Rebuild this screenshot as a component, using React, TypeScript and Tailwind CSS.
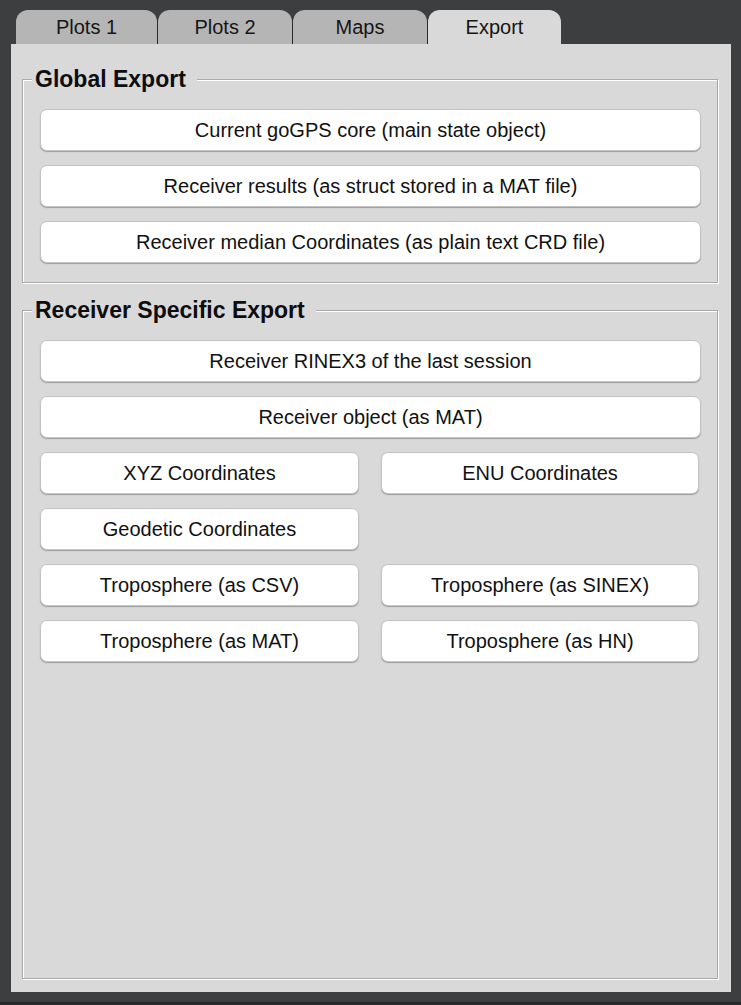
import React from 'react';

const tabs = [
  { label: 'Plots 1', width: 'w-[141px]', first: true },
  { label: 'Plots 2', width: 'w-[135px]' },
  { label: 'Maps', width: 'w-[135px]' },
  { label: 'Export', width: 'w-[134px]', active: true },
];

const ExportButton: React.FC<{ label: string; className?: string }> = ({ label, className = 'w-[661px]' }) => (
  <button
    className={`${className} h-[42px] shrink-0 rounded-[7px] bg-white border border-[#c4c4c4] shadow-[0_1px_1px_rgba(0,0,0,0.28)] text-[20px] text-[#111] leading-none`}
  >
    {label}
  </button>
);

const GroupBox: React.FC<{ title: string; className: string; children: React.ReactNode }> = ({ title, className, children }) => (
  <div
    className={`relative w-[696px] border border-[#a9a9a9] shadow-[inset_1px_1px_0_#fff,1px_1px_0_#fff] pt-[29px] pl-[17px] ${className}`}
  >
    <div className="absolute left-[9px] top-[-1px] -translate-y-1/2 bg-[#d9d9d9] pl-[3px] pr-[11px] text-[23px] font-bold leading-[28px] text-[#0d0d0d]">
      {title}
    </div>
    {children}
  </div>
);

const App: React.FC = () => {
  return (
    <div className="w-[741px] h-[1005px] bg-[#3d3e40] flex flex-col font-['Liberation_Sans',Arial,sans-serif] overflow-hidden">
      <div className="flex items-end pl-[16px] pt-[10px] h-[44px] shrink-0">
        {tabs.map((t) => (
          <div
            key={t.label}
            className={`${t.width} h-[34px] flex items-center justify-center text-[20px] text-[#151515] rounded-t-[12px] ${
              t.active ? 'bg-[#d9d9d9]' : 'bg-[#b5b5b5]'
            } ${t.first ? '' : 'border-l border-[#2a2a2a]'}`}
          >
            {t.label}
          </div>
        ))}
      </div>

      <div className="ml-[11px] w-[720px] h-[948px] shrink-0 bg-[#d9d9d9] pt-[35px] pl-[11px]">
        <GroupBox title="Global Export" className="h-[204px]">
          <div className="flex flex-col gap-[14px]">
            <ExportButton label="Current goGPS core (main state object)" />
            <ExportButton label="Receiver results (as struct stored in a MAT file)" />
            <ExportButton label="Receiver median Coordinates (as plain text CRD file)" />
          </div>
        </GroupBox>

        <GroupBox title="Receiver Specific Export" className="h-[669px] mt-[27px]">
          <div className="flex flex-col gap-[14px]">
            <ExportButton label="Receiver RINEX3 of the last session" />
            <ExportButton label="Receiver object (as MAT)" />
            <div className="grid grid-cols-[319px_318px] gap-x-[22px] gap-y-[14px]">
              <ExportButton label="XYZ Coordinates" className="w-full" />
              <ExportButton label="ENU Coordinates" className="w-full" />
              <ExportButton label="Geodetic Coordinates" className="w-full" />
              <div />
              <ExportButton label="Troposphere (as CSV)" className="w-full" />
              <ExportButton label="Troposphere (as SINEX)" className="w-full" />
              <ExportButton label="Troposphere (as MAT)" className="w-full" />
              <ExportButton label="Troposphere (as HN)" className="w-full" />
            </div>
          </div>
        </GroupBox>
      </div>

      <div className="flex-1" />
      <div className="h-[3px] shrink-0 bg-[#282828]" />
    </div>
  );
};

export default App;
